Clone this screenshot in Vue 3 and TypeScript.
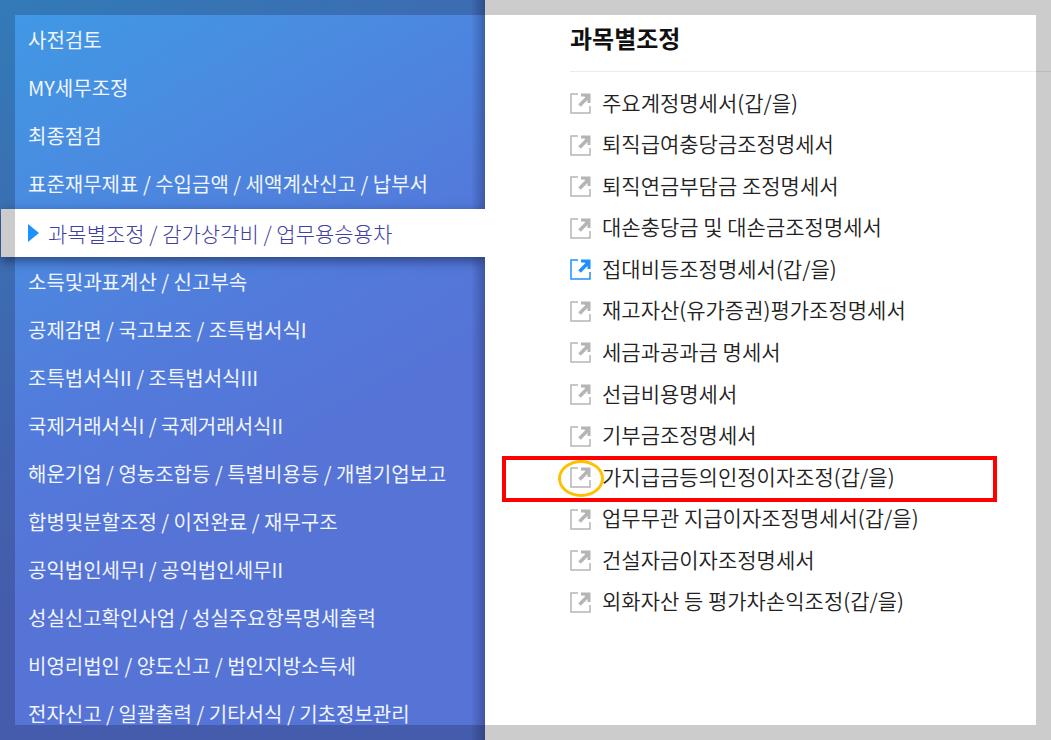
<script setup lang="ts">
interface FormItem {
  name: string
  hot?: boolean
  marked?: boolean
}

const categories: string[] = [
  '사전검토',
  'MY세무조정',
  '최종점검',
  '표준재무제표 / 수입금액 / 세액계산신고 / 납부서',
  '과목별조정 / 감가상각비 / 업무용승용차',
  '소득및과표계산 / 신고부속',
  '공제감면 / 국고보조 / 조특법서식I',
  '조특법서식II / 조특법서식III',
  '국제거래서식I / 국제거래서식II',
  '해운기업 / 영농조합등 / 특별비용등 / 개별기업보고',
  '합병및분할조정 / 이전완료 / 재무구조',
  '공익법인세무I / 공익법인세무II',
  '성실신고확인사업 / 성실주요항목명세출력',
  '비영리법인 / 양도신고 / 법인지방소득세',
  '전자신고 / 일괄출력 / 기타서식 / 기초정보관리',
]
const selected = 4

const forms: FormItem[] = [
  { name: '주요계정명세서(갑/을)' },
  { name: '퇴직급여충당금조정명세서' },
  { name: '퇴직연금부담금 조정명세서' },
  { name: '대손충당금 및 대손금조정명세서' },
  { name: '접대비등조정명세서(갑/을)', hot: true },
  { name: '재고자산(유가증권)평가조정명세서' },
  { name: '세금과공과금 명세서' },
  { name: '선급비용명세서' },
  { name: '기부금조정명세서' },
  { name: '가지급금등의인정이자조정(갑/을)', marked: true },
  { name: '업무무관 지급이자조정명세서(갑/을)' },
  { name: '건설자금이자조정명세서' },
  { name: '외화자산 등 평가차손익조정(갑/을)' },
]
</script>

<template>
  <div class="page">
    <nav class="sidebar">
      <ul class="categories">
        <li v-for="(c, i) in categories" :key="c" :class="{ selected: i === selected }">
          <a href="#">
            <svg v-if="i === selected" class="arrow" viewBox="0 0 11 18" aria-hidden="true">
              <path d="M0 0L11 9L0 18Z" fill="#1e90ff" />
            </svg>
            <span>{{ c }}</span>
          </a>
        </li>
      </ul>
    </nav>
    <main class="content">
      <h1>과목별조정</h1>
      <ul class="forms">
        <li v-for="f in forms" :key="f.name" :class="{ hot: f.hot }">
          <a href="#">
            <svg class="open" viewBox="0 0 21 21" aria-hidden="true">
              <path class="frame" d="M8 1H1V20H20V13" />
              <path class="shaft" d="M9.5 12.5L18 4" />
              <path class="head" d="M11 0.5H20.5V10H17.5V6.5L14.5 3.5H11Z" />
            </svg>
            <span>{{ f.name }}</span>
          </a>
          <template v-if="f.marked">
            <span class="mark-box"></span>
            <span class="mark-ring"></span>
          </template>
        </li>
      </ul>
    </main>
    <div class="edge"></div>
  </div>
</template>

<style>
body {
  margin: 0;
}
</style>

<style scoped>
.page {
  position: relative;
  display: grid;
  grid-template-columns: 485fr 566fr;
  min-height: 100vh;
  overflow: hidden;
  background: #fff;
  font-family: "Noto Sans CJK KR", "Noto Sans", sans-serif;
}
ul {
  margin: 0;
  padding: 0;
  list-style: none;
}
a {
  display: flex;
  align-items: center;
  color: inherit;
  text-decoration: none;
  white-space: nowrap;
}
.sidebar {
  box-sizing: border-box;
  padding-top: 16px;
  background:
    linear-gradient(to left, rgba(20, 30, 80, 0.35), rgba(20, 30, 80, 0) 14px),
    linear-gradient(150deg, #3f9ae6 0%, #4a8be0 22%, #527bdb 44%, #5673d6 62%, #5673d6 100%);
}
.categories a {
  height: 48px;
  padding-left: 28px;
  color: #f0f5ff;
  font-size: 20px;
  font-weight: 400;
  line-height: 28px;
}
.categories .selected {
  margin: 1px 0 1px 1px;
  background: #fff;
  box-shadow: 0 4px 10px rgba(20, 30, 70, 0.6);
}
.categories .selected a {
  gap: 9px;
  padding-left: 27px;
  color: #4040a0;
  font-size: 21px;
  font-weight: 300;
}
.arrow {
  width: 11px;
  height: 18px;
}
.content {
  position: relative;
  background: #fff;
  padding-left: 85px;
}
h1 {
  margin: 0 0 11px;
  padding: 20px 0 15px;
  border-bottom: 1px solid #ebebeb;
  color: #111;
  font-size: 24px;
  font-weight: 700;
  line-height: 36px;
}
.forms {
  display: grid;
  grid-auto-rows: 1fr;
  min-height: 540px;
}
.forms li {
  position: relative;
  display: flex;
  align-items: center;
}
.forms a {
  gap: 11px;
  color: #222;
  font-size: 21px;
  font-weight: 350;
  line-height: 28px;
}
.forms a span {
  padding-bottom: 4px;
}
.open {
  width: 21px;
  height: 21px;
  color: #b5b5b5;
}
.hot .open {
  color: #1e90ff;
}
.frame,
.shaft {
  fill: none;
  stroke: currentColor;
}
.frame {
  stroke-width: 1.5;
}
.shaft {
  stroke-width: 3.5;
}
.head {
  fill: currentColor;
}
.mark-box,
.mark-ring {
  position: absolute;
  box-sizing: border-box;
  pointer-events: none;
}
.mark-box {
  top: -1px;
  bottom: -4px;
  left: -68px;
  right: 54px;
  border: 4px solid #f00;
}
.mark-ring {
  top: 3px;
  left: -12px;
  width: 46px;
  height: 37px;
  border: 3px solid #ffc000;
  border-radius: 50%;
}
.edge {
  position: absolute;
  inset: 0;
  border: 15px solid rgba(0, 0, 0, 0.2);
  pointer-events: none;
}
</style>
